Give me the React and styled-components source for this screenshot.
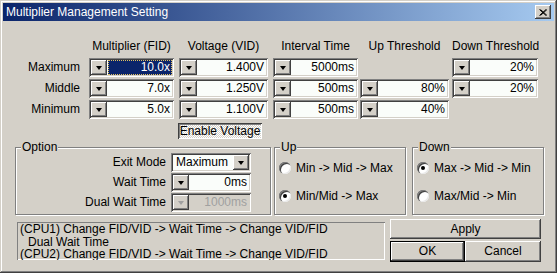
import React from 'react';
import styled, { createGlobalStyle, css } from 'styled-components';

const face = '#d4d0c8';

const GlobalStyle = createGlobalStyle`
  html, body {
    margin: 0;
    padding: 0;
    background: ${face};
  }
  body {
    font-family: "Liberation Sans", Arial, sans-serif;
    font-size: 12px;
    color: #000;
  }
`;

const raised = css`
  box-shadow: inset -1px -1px #404040, inset 1px 1px #fff, inset -2px -2px #808080, inset 2px 2px ${face};
`;
const sunken = css`
  box-shadow: inset 1px 1px #808080, inset -1px -1px #fff, inset 2px 2px #404040, inset -2px -2px ${face};
`;

const Window = styled.div`
  width: 557px;
  height: 273px;
  box-sizing: border-box;
  padding: 3px;
  background: ${face};
  box-shadow: inset -1px -1px #404040, inset 1px 1px ${face}, inset -2px -2px #808080, inset 2px 2px #fff;
  display: flex;
  flex-direction: column;
`;

const TitleBar = styled.div`
  height: 18px;
  display: flex;
  align-items: center;
  justify-content: space-between;
  padding: 0 3px 0 3px;
  background: linear-gradient(to right, #0a246a, #a6caf0);
  color: #fff;
  font-size: 12px;
`;

const CloseBtn = styled.div`
  width: 16px;
  height: 14px;
  box-sizing: border-box;
  background: ${face};
  ${raised};
  display: flex;
  align-items: center;
  justify-content: center;
`;

const TopGrid = styled.div`
  display: grid;
  grid-template-columns: 86px 90px 94px 87px 92px 86px;
  grid-template-rows: 19px 21px 21px 23px 16px;
  margin-top: 18px;
`;

const Header = styled.div`
  width: ${p => p.$w}px;
  text-align: center;
  line-height: 14px;
  white-space: nowrap;
`;

const RowLabel = styled.div`
  text-align: right;
  padding-right: 9px;
  line-height: 19px;
  white-space: nowrap;
`;

const Spin = styled.div`
  width: ${p => p.$w}px;
  height: 19px;
  box-sizing: border-box;
  padding: 2px;
  display: flex;
  background: ${p => (p.$disabled ? face : '#fafdfa')};
  ${sunken};
`;

const DropBtn = styled.div`
  flex: none;
  width: 16px;
  height: 100%;
  box-sizing: border-box;
  background: ${face};
  ${raised};
  display: flex;
  align-items: center;
  justify-content: center;
`;

const Arrow = styled.span`
  width: 0;
  height: 0;
  border-left: 3px solid transparent;
  border-right: 3px solid transparent;
  border-top: 4px solid ${p => (p.$disabled ? '#a0a0a0' : '#000')};
`;

const Field = styled.div`
  flex: 1;
  margin-left: 1px;
  padding-right: 2px;
  text-align: ${p => (p.$left ? 'left' : 'right')};
  padding-left: ${p => (p.$left ? '2px' : '0')};
  line-height: 15px;
  white-space: nowrap;
  color: ${p => (p.$disabled ? '#a0a0a0' : p.$selected ? '#fff' : '#000')};
  background: ${p => (p.$selected ? '#0a246a' : 'transparent')};
  outline: ${p => (p.$selected ? '1px dotted #e0c060' : 'none')};
  outline-offset: -1px;
`;

const ToggleBtn = styled.div`
  width: 84px;
  height: 16px;
  margin-left: -1px;
  box-sizing: border-box;
  text-align: center;
  line-height: 16px;
  background: repeating-conic-gradient(#fff 0 25%, ${face} 0 50%) 0 0 / 2px 2px;
  box-shadow: inset 1px 1px #404040, inset -1px -1px #fff, inset 2px 2px #808080;
`;

const GroupRow = styled.div`
  display: flex;
  margin-top: 2px;
  margin-left: 12px;
`;

const Group = styled.fieldset`
  margin: 0 ${p => p.$gap}px 0 0;
  padding: 0;
  min-inline-size: 0;
  width: ${p => p.$w}px;
  height: 74px;
  box-sizing: border-box;
  border: 1px solid #808080;
  box-shadow: inset 1px 1px #fff, 1px 1px #fff;
`;

const Legend = styled.legend`
  margin-left: 5px;
  padding: 0 1px;
  line-height: 12px;
  background: ${face};
`;

const OptionGrid = styled.div`
  display: grid;
  grid-template-columns: 150px 80px;
  grid-auto-rows: 19px;
  column-gap: 5px;
  row-gap: 1px;
`;

const OptLabel = styled.div`
  text-align: right;
  line-height: 19px;
  white-space: nowrap;
`;

const RadioList = styled.div`
  display: flex;
  flex-direction: column;
  gap: 10px;
  padding: 6px 0 0 4px;
`;

const RadioRow = styled.label`
  display: flex;
  align-items: center;
  gap: 5px;
  height: 18px;
  white-space: nowrap;
`;

const RadioDot = styled.span`
  width: 12px;
  height: 12px;
  border-radius: 50%;
  background: #fff;
  box-shadow: inset 1px 1px #808080, inset 2px 2px #404040, inset -1px -1px #e8e8e8;
  display: flex;
  align-items: center;
  justify-content: center;
  &::after {
    content: '';
    width: 4px;
    height: 4px;
    border-radius: 50%;
    background: ${p => (p.$on ? '#000' : 'transparent')};
  }
`;

const BottomRow = styled.div`
  display: flex;
  gap: 5px;
  margin-top: 4px;
  margin-left: 14px;
`;

const InfoBox = styled.div`
  width: 368px;
  height: 38px;
  margin-top: 3px;
  box-sizing: border-box;
  padding: 1px 3px;
  line-height: 12.5px;
  white-space: nowrap;
  overflow: hidden;
  box-shadow: inset 1px 1px #808080, inset -1px -1px #fff;
`;

const Indent = styled.div`
  padding-left: 8px;
`;

const ButtonCol = styled.div`
  width: 151px;
  display: flex;
  flex-direction: column;
  gap: 2px;
`;

const ButtonPair = styled.div`
  display: flex;
`;

const PushBtn = styled.div`
  flex: ${p => (p.$grow ? 1 : 'none')};
  width: ${p => (p.$w ? `${p.$w}px` : 'auto')};
  height: ${p => p.$h}px;
  box-sizing: border-box;
  text-align: center;
  line-height: ${p => p.$h}px;
  background: ${face};
  ${raised};
  ${p => p.$default && css`
    border: 1px solid #000;
    line-height: ${p.$h - 2}px;
  `}
`;

const rows = [
  { label: 'Maximum', vals: ['10.0x', '1.400V', '5000ms', null, '20%'] },
  { label: 'Middle', vals: ['7.0x', '1.250V', '500ms', '80%', '20%'] },
  { label: 'Minimum', vals: ['5.0x', '1.100V', '500ms', '40%', null] },
];

const widths = [85, 89, 85, 89, 86];
const heads = ['Multiplier (FID)', 'Voltage (VID)', 'Interval Time', 'Up Threshold', 'Down Threshold'];

function SpinEdit({ w, value, selected, disabled }) {
  return (
    <Spin $w={w} $disabled={disabled}>
      <DropBtn>
        <Arrow $disabled={disabled} />
      </DropBtn>
      <Field $selected={selected} $disabled={disabled}>{value}</Field>
    </Spin>
  );
}

function Radio({ on, children }) {
  return (
    <RadioRow>
      <RadioDot $on={on} />
      {children}
    </RadioRow>
  );
}

export default function App() {
  return (
    <>
      <GlobalStyle />
      <Window>
        <TitleBar>
          <span>Multiplier Management Setting</span>
          <CloseBtn>
            <svg width="8" height="7" viewBox="0 0 8 7">
              <path d="M0.5 0.5L7 6.5M1.5 0.5L8 6.5M7 0.5L0.5 6.5M8 0.5L1.5 6.5" stroke="#000" strokeWidth="1" />
            </svg>
          </CloseBtn>
        </TitleBar>

        <TopGrid>
          <span />
          {heads.map((h, i) => (
            <Header key={h} $w={widths[i]}>{h}</Header>
          ))}
          {rows.map((r, ri) => (
            <React.Fragment key={r.label}>
              <RowLabel>{r.label}</RowLabel>
              {r.vals.map((v, i) =>
                v === null ? (
                  <span key={i} />
                ) : (
                  <SpinEdit key={i} w={widths[i]} value={v} selected={ri === 0 && i === 0} />
                )
              )}
            </React.Fragment>
          ))}
          <span />
          <span />
          <ToggleBtn>Enable Voltage</ToggleBtn>
        </TopGrid>

        <GroupRow>
          <Group $w={256} $gap={3}>
            <Legend>Option</Legend>
            <OptionGrid>
              <OptLabel>Exit Mode</OptLabel>
              <Spin $w={80}>
                <Field $left>Maximum</Field>
                <DropBtn>
                  <Arrow />
                </DropBtn>
              </Spin>
              <OptLabel>Wait Time</OptLabel>
              <SpinEdit w={80} value="0ms" />
              <OptLabel>Dual Wait Time</OptLabel>
              <SpinEdit w={80} value="1000ms" disabled />
            </OptionGrid>
          </Group>
          <Group $w={132} $gap={6}>
            <Legend>Up</Legend>
            <RadioList>
              <Radio>Min -&gt; Mid -&gt; Max</Radio>
              <Radio on>Min/Mid -&gt; Max</Radio>
            </RadioList>
          </Group>
          <Group $w={132} $gap={0}>
            <Legend>Down</Legend>
            <RadioList>
              <Radio on>Max -&gt; Mid -&gt; Min</Radio>
              <Radio>Max/Mid -&gt; Min</Radio>
            </RadioList>
          </Group>
        </GroupRow>

        <BottomRow>
          <InfoBox>
            <div>(CPU1) Change FID/VID -&gt; Wait Time -&gt; Change VID/FID</div>
            <Indent>Dual Wait Time</Indent>
            <div>(CPU2) Change FID/VID -&gt; Wait Time -&gt; Change VID/FID</div>
          </InfoBox>
          <ButtonCol>
            <PushBtn $h={20}>Apply</PushBtn>
            <ButtonPair>
              <PushBtn $w={75} $h={21} $default>OK</PushBtn>
              <PushBtn $grow $h={21}>Cancel</PushBtn>
            </ButtonPair>
          </ButtonCol>
        </BottomRow>
      </Window>
    </>
  );
}
